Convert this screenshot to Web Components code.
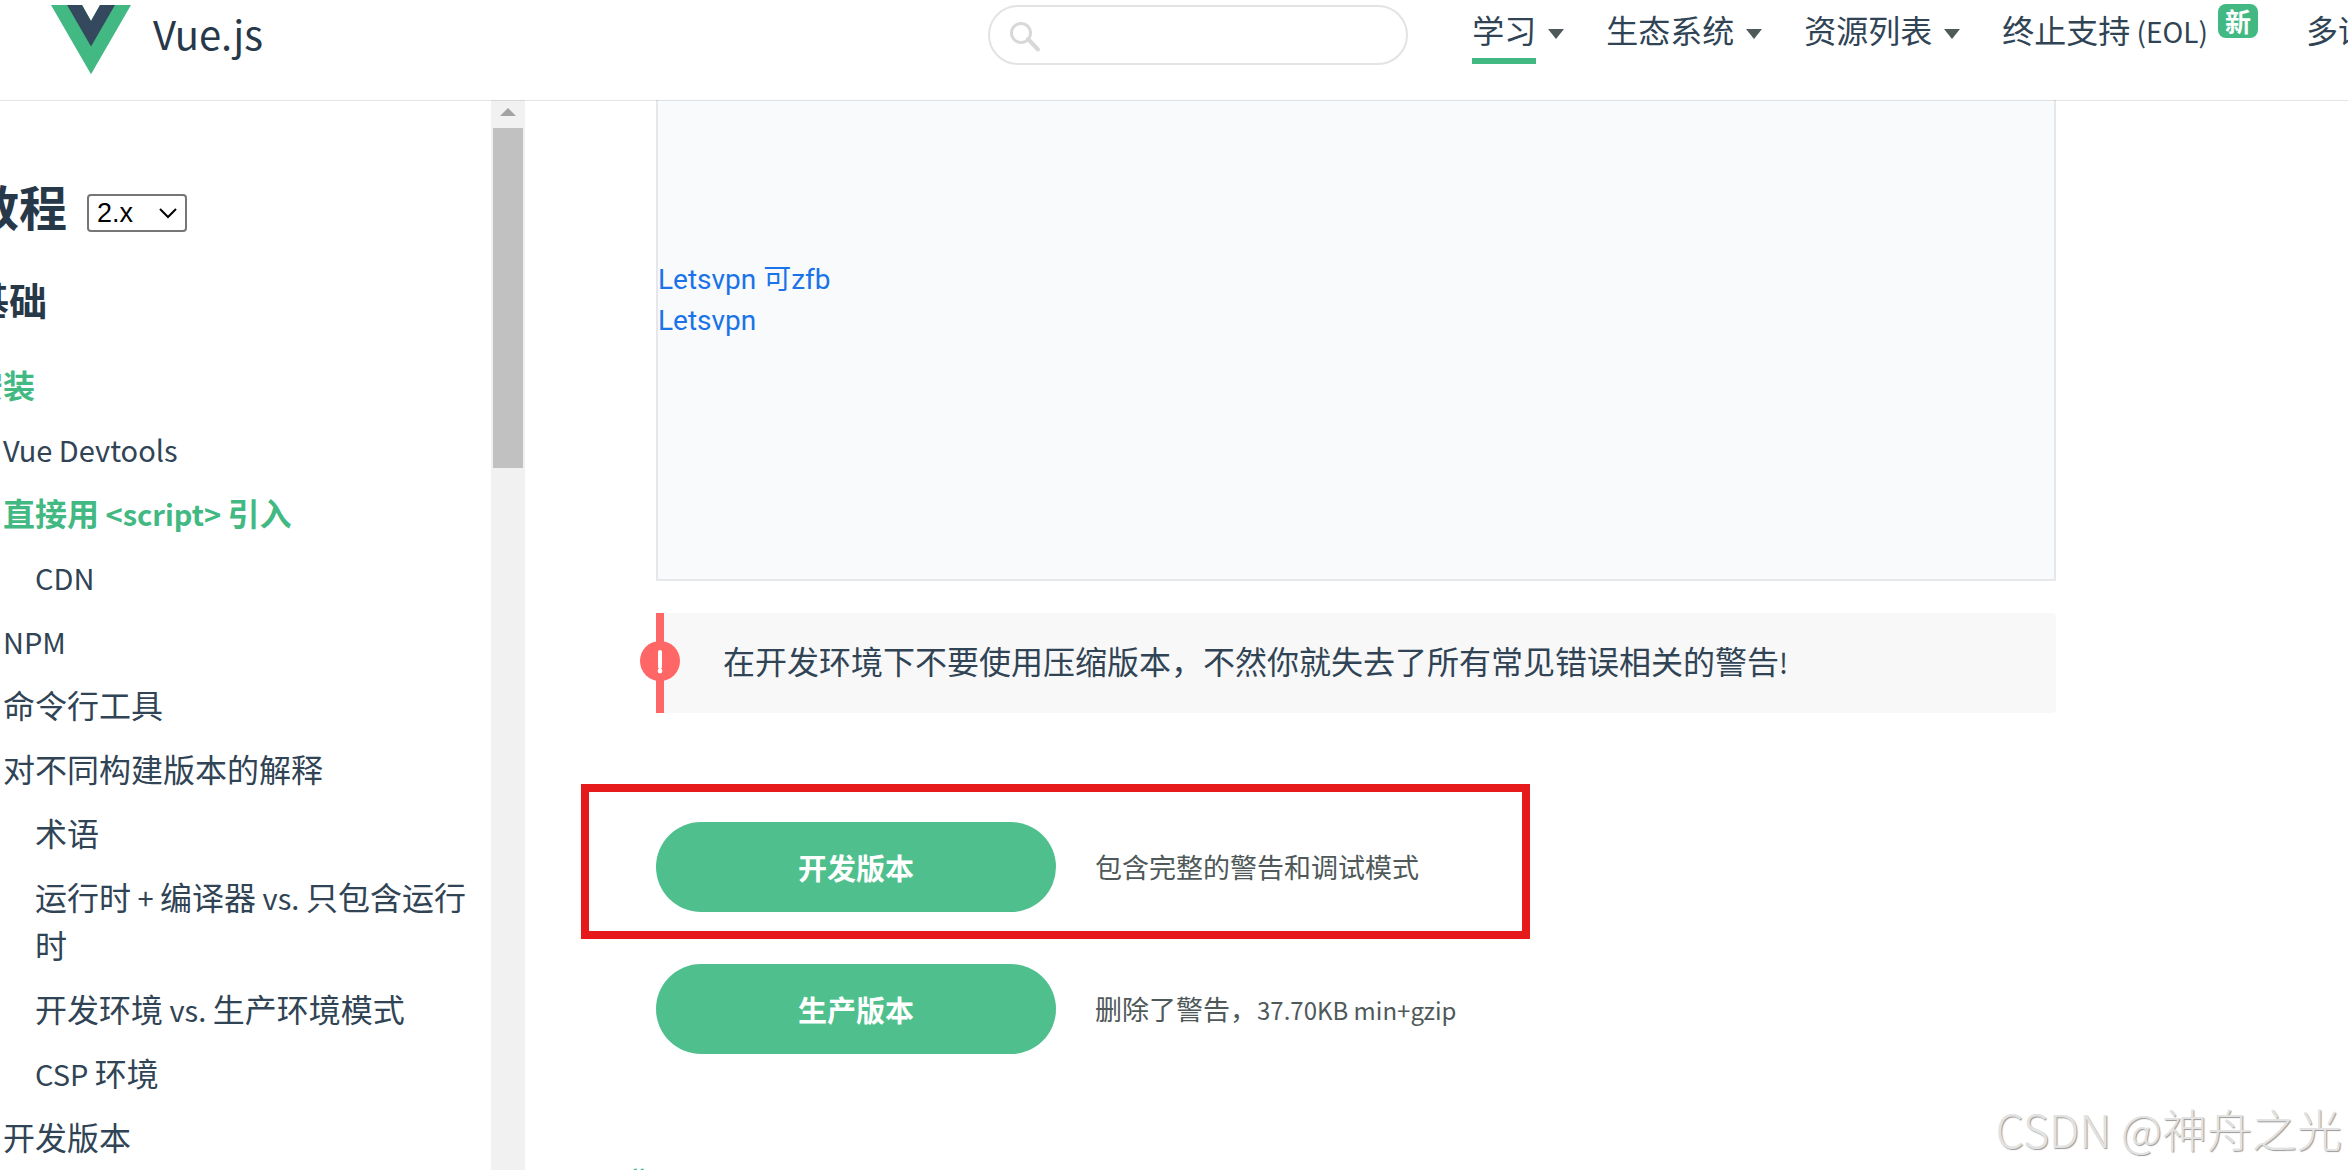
<!DOCTYPE html>
<html lang="zh-CN">
<head>
<meta charset="UTF-8">
<meta name="viewport" content="width=device-width, initial-scale=1">
<title>安装 — Vue.js</title>
<style>
    * {
        box-sizing: border-box;
    }
    body {
        margin: 0;
        height: 100vh;
        overflow: hidden;
        display: flex;
        flex-direction: column;
        background: #fff;
        color: #304455;
        font-family: "Noto Sans CJK SC", sans-serif;
        font-size: 32px;
        line-height: 48px;
        --green: #42b983;
        --button: #4fc08d;
        --dark: #273849;
    }
    .layout {
        flex: 1;
        min-height: 0;
        display: flex;
    }
    main {
        flex: 1;
        min-width: 0;
        overflow: hidden;
        padding: 0 131px;
    }
    .content {
        max-width: 1400px;
    }
    .downloads {
        display: flex;
        flex-direction: column;
        gap: 52px;
        margin: 109px 0 108px;
    }
    small {
        font-size: 28px;
        line-height: 32px;
    }
    toc-item small {
        font-size: 29px;
    }
    download-link small {
        font-size: 24px;
    }
</style>
</head>
<body>

<site-header>
    <nav-item href="#learn" menu current>学习</nav-item>
    <nav-item href="#ecosystem" menu>生态系统</nav-item>
    <nav-item href="#resources" menu>资源列表</nav-item>
    <nav-item href="#eol" badge="新">终止支持<small> (EOL)</small></nav-item>
    <nav-item href="#translations" menu>多语言</nav-item>
</site-header>

<div class="layout">
    <doc-sidebar>
        <toc-item href="#install" level="1" active>安装</toc-item>
        <toc-item href="#devtools" level="2"><small>Vue Devtools</small></toc-item>
        <toc-item href="#script" level="2" active>直接用<small> &lt;script&gt; </small>引入</toc-item>
        <toc-item href="#cdn" level="3"><small>CDN</small></toc-item>
        <toc-item href="#npm" level="2"><small>NPM</small></toc-item>
        <toc-item href="#cli" level="2">命令行工具</toc-item>
        <toc-item href="#builds" level="2">对不同构建版本的解释</toc-item>
        <toc-item href="#terms" level="3">术语</toc-item>
        <toc-item href="#runtime" level="3">运行时<small> + </small>编译器<small> vs. </small>只包含运行时</toc-item>
        <toc-item href="#modes" level="3">开发环境<small> vs. </small>生产环境模式</toc-item>
        <toc-item href="#csp" level="3"><small>CSP </small>环境</toc-item>
        <toc-item href="#dev" level="2">开发版本</toc-item>
    </doc-sidebar>

    <main>
        <div class="content">
            <ad-frame>
                <a href="#ad-1">Letsvpn 可zfb</a>
                <a href="#ad-2">Letsvpn</a>
            </ad-frame>
            <tip-box>在开发环境下不要使用压缩版本，不然你就失去了所有常见错误相关的警告<small>!</small></tip-box>
            <div class="downloads">
                <download-link label="开发版本" marked>包含完整的警告和调试模式</download-link>
                <download-link label="生产版本">删除了警告，<small>37.70KB min+gzip</small></download-link>
            </div>
            <section-anchor href="#cdn"></section-anchor>
        </div>
    </main>
</div>

<water-mark>CSDN @神舟之光</water-mark>

<script>
class SiteHeader extends HTMLElement {
    connectedCallback() {
        this.attachShadow({ mode: 'open' });
        this.shadowRoot.innerHTML = `
            <style>
                :host {
                    flex: none;
                    display: grid;
                    grid-template-columns: 42% 1fr;
                    align-items: start;
                    height: 100px;
                    position: relative;
                    z-index: 10;
                    background: #fff;
                    box-shadow: 0 1px 0 rgba(0, 0, 0, 0.1);
                    white-space: nowrap;
                }
                .logo {
                    display: flex;
                    gap: 22px;
                    padding: 5px 0 0 51px;
                    color: var(--dark);
                    text-decoration: none;
                    font-size: 40px;
                    line-height: 56px;
                }
                .logo svg {
                    display: block;
                }
                .right {
                    display: flex;
                    align-items: flex-start;
                    min-width: 0;
                    overflow: hidden;
                    padding-top: 4px;
                }
                .search {
                    position: relative;
                    flex: none;
                    width: 420px;
                    margin: 1px 64px 0 2px;
                }
                .search svg {
                    position: absolute;
                    left: 22px;
                    top: 16px;
                }
                input {
                    display: block;
                    box-sizing: border-box;
                    width: 100%;
                    height: 60px;
                    padding: 0 30px 0 60px;
                    border: 2px solid #e3e3e3;
                    border-radius: 30px;
                    background: #fff;
                    font: inherit;
                    outline: none;
                }
                nav {
                    display: flex;
                    gap: 42px;
                }
            </style>
            <a class="logo" href="#home">
                <svg width="80" height="70" viewBox="0 0 80 70">
                    <path d="M0 0h31l9 16 9-16h31L40 69.300z" fill="#42b883"/>
                    <path d="M16 0h15l9 16 9-16h15L40 41.500z" fill="#35495e"/>
                </svg>
                <span>Vue.js</span>
            </a>
            <div class="right">
                <div class="search">
                    <input type="text" aria-label="搜索">
                    <svg width="32" height="32" viewBox="0 0 32 32" fill="none" stroke="#d8d8d8">
                        <circle cx="11" cy="12" r="9.500" stroke-width="3"/>
                        <path d="M18 18l10 10.500" stroke-width="4" stroke-linecap="round"/>
                    </svg>
                </div>
                <nav><slot></slot></nav>
            </div>
        `;
    }
}

class NavItem extends HTMLElement {
    connectedCallback() {
        const badge = this.getAttribute('badge');
        this.attachShadow({ mode: 'open' });
        this.shadowRoot.innerHTML = `
            <style>
                :host {
                    display: flex;
                    flex: none;
                    align-items: flex-start;
                }
                :host([badge]) {
                    margin-right: 6px;
                }
                a {
                    display: block;
                    height: 60px;
                    box-sizing: border-box;
                    color: inherit;
                    line-height: 51px;
                    text-decoration: none;
                }
                :host([current]) a {
                    border-bottom: 6px solid var(--green);
                }
                .arrow {
                    margin: 25px 0 0 12px;
                    border: 8px solid transparent;
                    border-top: 10px solid #4f5959;
                    border-bottom: 0;
                }
                .badge {
                    margin-left: 10px;
                    padding: 0 7px;
                    border-radius: 8px;
                    background: var(--green);
                    color: #fff;
                    font-size: 26px;
                    font-weight: 700;
                    line-height: 34px;
                }
            </style>
            <a href="${this.getAttribute('href')}"><slot></slot></a>
            ${this.hasAttribute('menu') ? '<span class="arrow"></span>' : ''}
            ${badge ? `<span class="badge">${badge}</span>` : ''}
        `;
    }
}

class DocSidebar extends HTMLElement {
    connectedCallback() {
        this.attachShadow({ mode: 'open' });
        this.shadowRoot.innerHTML = `
            <style>
                :host {
                    flex: none;
                    display: flex;
                    width: 525px;
                    overflow: hidden;
                }
                /* the page is scrolled a little to the right */
                .inner {
                    flex: 1;
                    min-width: 0;
                    margin-left: -29px;
                    padding: 69px 16px 0 0;
                }
                .title {
                    display: flex;
                    align-items: center;
                    gap: 20px;
                }
                h2 {
                    margin: 0;
                    color: var(--dark);
                    font-size: 48px;
                    line-height: 72px;
                }
                h3 {
                    margin: 30px 0 33px;
                    color: var(--dark);
                    font-size: 38px;
                    line-height: 56px;
                }
                .version {
                    position: relative;
                    margin-top: 16px;
                }
                select {
                    display: block;
                    appearance: none;
                    box-sizing: border-box;
                    width: 100px;
                    height: 38px;
                    padding: 0 8px;
                    border: 2px solid #767676;
                    border-radius: 4px;
                    background: #fff;
                    color: #000;
                    font: 27px "Liberation Sans", Arial, sans-serif;
                }
                .version svg {
                    position: absolute;
                    right: 10px;
                    top: 14px;
                    pointer-events: none;
                }
                .list {
                    display: flex;
                    flex-direction: column;
                    gap: 16px;
                }
                .scrollbar {
                    flex: none;
                    width: 34px;
                    padding: 8px 2px 0;
                    background: #f1f1f1;
                    box-sizing: border-box;
                }
                .scrollbar svg {
                    display: block;
                    margin: 0 auto 12px;
                }
                .thumb {
                    height: 340px;
                    background: #c1c1c1;
                }
            </style>
            <div class="inner">
                <div class="title">
                    <h2>教程</h2>
                    <div class="version">
                        <select aria-label="版本"><option>2.x</option></select>
                        <svg width="18" height="11" viewBox="0 0 18 11" fill="none" stroke="#000" stroke-width="2">
                            <path d="M1 1l8 8 8-8"/>
                        </svg>
                    </div>
                </div>
                <h3>基础</h3>
                <div class="list"><slot></slot></div>
            </div>
            <div class="scrollbar">
                <svg width="16" height="8" viewBox="0 0 16 8"><path d="M8 0l8 8H0z" fill="#a3a3a3"/></svg>
                <div class="thumb"></div>
            </div>
        `;
    }
}

class TocItem extends HTMLElement {
    connectedCallback() {
        this.attachShadow({ mode: 'open' });
        this.shadowRoot.innerHTML = `
            <style>
                :host {
                    display: block;
                }
                :host([level="2"]) {
                    padding-left: 32px;
                }
                :host([level="3"]) {
                    padding-left: 64px;
                }
                a {
                    color: inherit;
                    text-decoration: none;
                }
                :host([active]) a {
                    color: var(--green);
                    font-weight: 700;
                }
            </style>
            <a href="${this.getAttribute('href')}"><slot></slot></a>
        `;
    }
}

class AdFrame extends HTMLElement {
    connectedCallback() {
        this.attachShadow({ mode: 'open' });
        this.shadowRoot.innerHTML = `
            <style>
                :host {
                    display: flex;
                    flex-direction: column;
                    align-items: flex-start;
                    height: 481px;
                    padding-top: 159px;
                    border: 2px solid #e5e7ea;
                    border-top: 0;
                    background: #f9fafc;
                    font-family: Roboto, "Noto Sans CJK SC", sans-serif;
                    font-size: 28px;
                    line-height: 41px;
                }
                ::slotted(a) {
                    color: #1a73e8;
                    text-decoration: none;
                }
            </style>
            <slot></slot>
        `;
    }
}

class TipBox extends HTMLElement {
    connectedCallback() {
        this.attachShadow({ mode: 'open' });
        this.shadowRoot.innerHTML = `
            <style>
                :host {
                    display: block;
                    position: relative;
                    margin-top: 32px;
                    padding: 23px 59px 29px;
                    border-left: 8px solid #f66;
                    border-radius: 0 4px 4px 0;
                    background: #f8f8f8;
                }
                .mark {
                    position: absolute;
                    left: -24px;
                    top: 28px;
                    width: 40px;
                    height: 40px;
                }
            </style>
            <svg class="mark" viewBox="0 0 40 40">
                <circle cx="20" cy="20" r="20" fill="#f66"/>
                <path d="M20 11v15" stroke="#fff" stroke-width="4" stroke-linecap="round"/>
                <circle cx="20" cy="30" r="2.400" fill="#fff"/>
            </svg>
            <slot></slot>
        `;
    }
}

class DownloadLink extends HTMLElement {
    connectedCallback() {
        this.attachShadow({ mode: 'open' });
        this.shadowRoot.innerHTML = `
            <style>
                :host {
                    display: flex;
                    align-items: center;
                    gap: 39px;
                    position: relative;
                    color: #4f5959;
                    font-size: 27px;
                    line-height: 40px;
                }
                a {
                    flex: none;
                    width: 400px;
                    border-radius: 45px;
                    background: var(--button);
                    color: #fff;
                    font-size: 29px;
                    font-weight: 700;
                    line-height: 90px;
                    text-align: center;
                    text-decoration: none;
                }
                /* hand-drawn highlight over the row */
                .frame {
                    position: absolute;
                    left: -75px;
                    top: -38px;
                    bottom: -27px;
                    width: 949px;
                    box-sizing: border-box;
                    border: 8px solid #e61a1a;
                    pointer-events: none;
                }
            </style>
            <a href="#download">${this.getAttribute('label')}</a>
            <span><slot></slot></span>
            ${this.hasAttribute('marked') ? '<div class="frame"></div>' : ''}
        `;
    }
}

class SectionAnchor extends HTMLElement {
    connectedCallback() {
        this.attachShadow({ mode: 'open' });
        this.shadowRoot.innerHTML = `
            <style>
                :host {
                    display: block;
                    margin-left: -28px;
                    font-size: 32px;
                    font-weight: 700;
                    line-height: 32px;
                }
                a {
                    color: var(--green);
                    text-decoration: none;
                }
            </style>
            <a href="${this.getAttribute('href')}">#</a>
        `;
    }
}

class WaterMark extends HTMLElement {
    connectedCallback() {
        this.attachShadow({ mode: 'open' });
        this.shadowRoot.innerHTML = `
            <style>
                :host {
                    position: absolute;
                    right: 6px;
                    bottom: 11px;
                    color: #e2e2e2;
                    font-size: 45px;
                    font-weight: 300;
                    line-height: 60px;
                    text-shadow: 1px 1px 1px #999;
                    white-space: nowrap;
                }
            </style>
            <slot></slot>
        `;
    }
}

customElements.define('site-header', SiteHeader);
customElements.define('nav-item', NavItem);
customElements.define('doc-sidebar', DocSidebar);
customElements.define('toc-item', TocItem);
customElements.define('ad-frame', AdFrame);
customElements.define('tip-box', TipBox);
customElements.define('download-link', DownloadLink);
customElements.define('section-anchor', SectionAnchor);
customElements.define('water-mark', WaterMark);
</script>
</body>
</html>
